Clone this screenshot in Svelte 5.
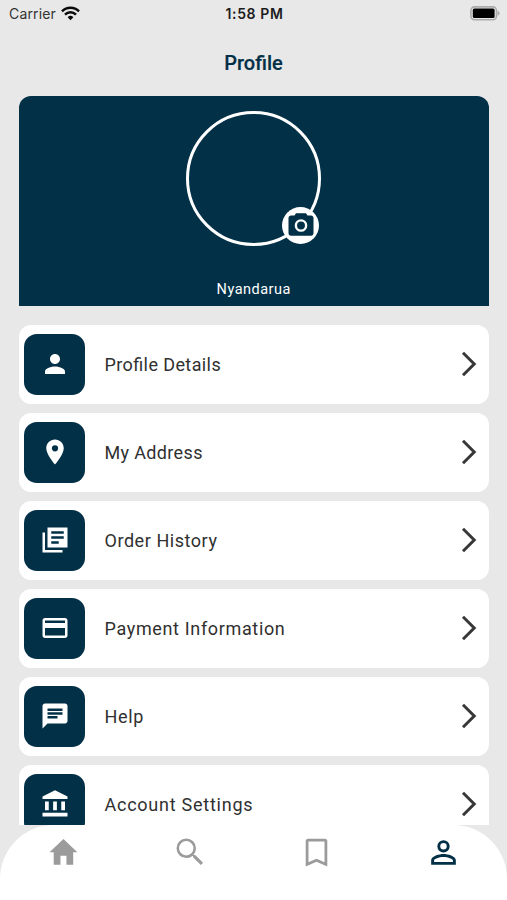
<script lang="ts">
	interface MenuItem {
		label: string;
		tone: string;
		icon: string;
	}

	const items: MenuItem[] = [
		{
			label: 'Profile Details',
			tone: 'details',
			icon: 'M12 12c2.21 0 4-1.79 4-4s-1.79-4-4-4-4 1.79-4 4 1.79 4 4 4zm0 2c-2.67 0-8 1.34-8 4v2h16v-2c0-2.66-5.33-4-8-4z'
		},
		{
			label: 'My Address',
			tone: 'address',
			icon: 'M12 2C8.13 2 5 5.13 5 9c0 5.25 7 13 7 13s7-7.75 7-13c0-3.87-3.13-7-7-7zm0 9.5a2.5 2.5 0 0 1 0-5 2.5 2.5 0 0 1 0 5z'
		},
		{
			label: 'Order History',
			tone: 'orders',
			icon: 'M4 6H2v16h16v-2H4zM22 2H6v16h16zM19 11H9V9h10zM15 15H9v-2h6zM19 7H9V5h10z'
		},
		{
			label: 'Payment Information',
			tone: 'payment',
			icon: 'M20 4H4c-1.11 0-1.99.89-1.99 2L2 18c0 1.11.89 2 2 2h16c1.11 0 2-.89 2-2V6c0-1.11-.89-2-2-2zm0 14H4v-6h16v6zm0-10H4V6h16v2z'
		},
		{
			label: 'Help',
			tone: 'help',
			icon: 'M20 2H4c-1.1 0-2 .9-2 2v18l4-4h14c1.1 0 2-.9 2-2V4c0-1.1-.9-2-2-2zM6 6h12v2H6zm8 8H6v-2h8zm4-3H6V9h12z'
		},
		{
			label: 'Account Settings',
			tone: 'account',
			icon: 'M4 10v7h3v-7zm6.5 0v7h3v-7zM2 22h20v-3H2zm15-12v7h3v-7zM12 1 2 6v2h20V6z'
		}
	];

	let active = $state('profile');
</script>

<div class="screen">
	<div class="status-bar">
		<div class="carrier">
			<span>Carrier</span>
			<svg width="19" height="15" viewBox="0 0 19 15" aria-hidden="true">
				<path d="M1 5.4a12 12 0 0 1 17 0M4 8.6a7.8 7.8 0 0 1 11 0" fill="none" stroke="#0b0b0b" stroke-width="2.5" />
				<path d="M6.6 11.2a4.1 4.1 0 0 1 5.8 0l-2.900 3z" fill="#0b0b0b" />
			</svg>
		</div>
		<span class="clock">1:58 PM</span>
		<div class="battery">
			<svg width="30" height="15" viewBox="0 0 30 15" aria-hidden="true">
				<rect x="0.9" y="0.9" width="25.6" height="12.8" rx="3.6" fill="none" stroke="#ababab" stroke-width="1.6" />
				<rect x="2.8" y="2.6" width="21.8" height="9.4" rx="1.6" fill="#000" />
				<path d="M27.6 4.8v5c1.300-.6 2-1.500 2-2.500s-.7-1.900-2-2.500z" fill="#ababab" />
			</svg>
		</div>
	</div>

	<h1>Profile</h1>

	<main>
		<section class="card">
			<div class="avatar">
				<button class="camera" aria-label="Change photo">
					<svg width="30" height="30" viewBox="0 0 24 24" aria-hidden="true">
						<path d="M20 4.400h-2.800L16 2.600H8L6.800 4.400H4c-1.100 0-2 .9-2 2v12.200c0 1.100.9 2 2 2h16c1.100 0 2-.9 2-2V6.400c0-1.100-.9-2-2-2z" />
						<circle cx="12" cy="12.4" r="4.1" />
					</svg>
				</button>
			</div>
			<p class="name">Nyandarua</p>
		</section>

		<ul>
			{#each items as item (item.label)}
				<li>
					<span class="tile">
						<svg width="30" height="30" viewBox="0 0 24 24" aria-hidden="true">
							<path d={item.icon} fill-rule="evenodd" />
						</svg>
					</span>
					<span class="label {item.tone}">{item.label}</span>
					<svg class="chevron" width="16" height="26" viewBox="0 0 16 26" aria-hidden="true">
						<path d="M2 1.800 13.200 13 2 24.200" />
					</svg>
				</li>
			{/each}
		</ul>
	</main>

	<nav>
		<button class:active={active === 'home'} onclick={() => (active = 'home')} aria-label="Home">
			<svg width="36" height="36" viewBox="0 0 24 24"><path d="M10.300 20.500v-6h4v6h4.500v-8.300h2.800L12.300 3.300 3 12.200h2.800v8.300z" /></svg>
		</button>
		<button class:active={active === 'search'} onclick={() => (active = 'search')} aria-label="Search">
			<svg width="36" height="36" viewBox="0 0 24 24"><path d="M15.500 14h-.79l-.28-.27A6.47 6.47 0 0 0 16 9.500 6.500 6.500 0 1 0 9.500 16c1.610 0 3.090-.59 4.230-1.570l.27.280v.79l5.200 5.200L20.700 19.200zm-6 .300a4.800 4.800 0 1 1 0-9.600 4.800 4.800 0 0 1 0 9.600z" /></svg>
		</button>
		<button class:active={active === 'saved'} onclick={() => (active = 'saved')} aria-label="Saved">
			<svg width="37" height="37" viewBox="0 0 24 24"><path d="M17.500 3h-11C5.600 3 5 3.600 5 4.500V21l7-3 7 3V4.500c0-.9-.6-1.500-1.500-1.500zm-.3 15.300L12 16.100l-5.200 2.200V4.800h10.400z" /></svg>
		</button>
		<button class:active={active === 'profile'} onclick={() => (active = 'profile')} aria-label="Profile">
			<svg width="37" height="37" viewBox="0 0 24 24"><path d="M12 5.900a2.100 2.100 0 1 1 0 4.200 2.100 2.100 0 0 1 0-4.200m0 9c2.970 0 6.100 1.460 6.100 2.100v1.100H5.900V17c0-.64 3.130-2.100 6.100-2.100M12 4a4 4 0 1 0 0 8 4 4 0 0 0 0-8zm0 9c-2.670 0-8 1.340-8 4v3h16v-3c0-2.660-5.330-4-8-4z" /></svg>
		</button>
	</nav>
</div>

<style>
	:global(body) {
		margin: 0;
		background: #e8e8e8;
	}

	.screen {
		display: flex;
		flex-direction: column;
		width: 507px;
		height: 900px;
		overflow: hidden;
		background: #e8e8e8;
		font-family: Roboto, 'Liberation Sans', sans-serif;
	}

	button {
		display: flex;
		align-items: center;
		justify-content: center;
		margin: 0;
		padding: 0;
		border: 0;
		background: none;
	}

	svg {
		display: block;
		flex: none;
	}

	.status-bar {
		display: grid;
		grid-template-columns: 1fr auto 1fr;
		align-items: center;
		flex: none;
		height: 27px;
		padding: 0 7px 0 9px;
		font-family: Inter, sans-serif;
	}

	.carrier {
		display: flex;
		align-items: center;
		gap: 5px;
		font-size: 14px;
		letter-spacing: 0.15px;
		color: #333;
	}

	.clock {
		font-size: 14px;
		font-weight: 600;
		letter-spacing: 0.6px;
		color: #1c1c1c;
	}

	.battery {
		display: flex;
		justify-content: flex-end;
	}

	h1 {
		flex: none;
		height: 69px;
		margin: 0;
		line-height: 73px;
		text-align: center;
		font-size: 20px;
		font-weight: 500;
		color: #023047;
		-webkit-text-stroke: 0.2px #023047;
	}

	main {
		flex: 1;
		min-height: 0;
		overflow: hidden;
		padding: 0 18.5px 0 19px;
	}

	.card {
		display: flex;
		flex-direction: column;
		align-items: center;
		box-sizing: border-box;
		height: 209.5px;
		padding-top: 14.5px;
		border-radius: 12px 12px 0 0;
		background: #023047;
	}

	.avatar {
		position: relative;
		box-sizing: border-box;
		width: 135px;
		height: 135px;
		border: 3px solid #fff;
		border-radius: 50%;
	}

	.camera {
		position: absolute;
		right: -1px;
		bottom: -1px;
		width: 37px;
		height: 37px;
		border-radius: 50%;
		background: #fff;
		fill: #023047;
	}

	.camera circle {
		fill: none;
		stroke: #fff;
		stroke-width: 1.900;
	}

	.name {
		margin: 34px 0 0;
		line-height: 20px;
		font-size: 14.5px;
		letter-spacing: 0.5px;
		color: #fff;
	}

	ul {
		display: flex;
		flex-direction: column;
		gap: 9.5px;
		margin: 19.5px 0 0;
		padding: 0;
		list-style: none;
	}

	li {
		display: flex;
		align-items: center;
		flex: none;
		box-sizing: border-box;
		height: 78.5px;
		padding: 0 12px 0 5px;
		border-radius: 12px;
		background: #fff;
	}

	.tile {
		display: flex;
		align-items: center;
		justify-content: center;
		width: 61px;
		height: 61px;
		border-radius: 13px;
		background: #023047;
		fill: #fff;
	}

	.label {
		flex: 1;
		padding-left: 19.5px;
		font-size: 18px;
		color: #303030;
		font-feature-settings: 'liga' 1;
	}

	.details {
		letter-spacing: 0.4px;
	}

	.address {
		letter-spacing: 0.35px;
	}

	.orders {
		letter-spacing: 0.55px;
	}

	.payment,
	.help {
		letter-spacing: 0.65px;
	}

	.account {
		letter-spacing: 0.75px;
	}

	.chevron {
		fill: none;
		stroke: #383838;
		stroke-width: 3;
	}

	nav {
		display: grid;
		grid-template-columns: repeat(4, 1fr);
		flex: none;
		height: 75px;
		padding-top: 9px;
		box-sizing: border-box;
		border-radius: 54px 54px 0 0;
		background: #fff;
	}

	nav button {
		height: 36px;
		fill: #9b9b9b;
	}

	nav button.active {
		fill: #023047;
	}
</style>
